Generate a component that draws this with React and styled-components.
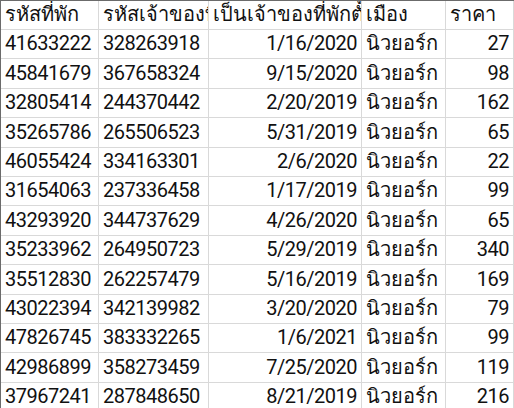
import React from 'react'
import styled, {createGlobalStyle} from 'styled-components'

const GlobalStyle = createGlobalStyle`
  html, body {
    margin: 0;
    padding: 0;
    background: #ffffff;
    overflow: hidden;
  }
`

const colors = {
  grid: '#d9d9d9',
  edge: '#6b6b6b',
  text: '#111111',
}

const columns = '98px 110px 153px 84px 1fr'

const Sheet = styled.div`
  width: 514px;
  height: 408px;
  overflow: hidden;
  border-top: 1px solid ${colors.edge};
  border-left: 1px solid ${colors.edge};
  box-sizing: border-box;
  font-family: Roboto, "Noto Sans", "Open Sans", sans-serif;
  color: ${colors.text};
`

const Row = styled.div`
  display: grid;
  grid-template-columns: ${columns};
  height: ${p => p.header ? '29px' : '29.4px'};
`

const Cell = styled.div`
  display: flex;
  align-items: flex-end;
  justify-content: ${p => p.right ? 'flex-end' : 'flex-start'};
  padding: 0 4px 3px 4px;
  border-right: 1px solid ${colors.grid};
  border-bottom: 1px solid ${colors.grid};
  box-sizing: border-box;
  overflow: hidden;
  white-space: nowrap;
  font-size: 20px;
  line-height: 24px;
  letter-spacing: ${p => p.thai ? '0' : '-0.5px'};
`

const headers = ['รหัสที่พัก', 'รหัสเจ้าของที่พัก', 'เป็นเจ้าของที่พักตั้งแต่', 'เมือง', 'ราคา']

const rows = [
  ['41633222', '328263918', '1/16/2020', 27],
  ['45841679', '367658324', '9/15/2020', 98],
  ['32805414', '244370442', '2/20/2019', 162],
  ['35265786', '265506523', '5/31/2019', 65],
  ['46055424', '334163301', '2/6/2020', 22],
  ['31654063', '237336458', '1/17/2019', 99],
  ['43293920', '344737629', '4/26/2020', 65],
  ['35233962', '264950723', '5/29/2019', 340],
  ['35512830', '262257479', '5/16/2019', 169],
  ['43022394', '342139982', '3/20/2020', 79],
  ['47826745', '383332265', '1/6/2021', 99],
  ['42986899', '358273459', '7/25/2020', 119],
  ['37967241', '287848650', '8/21/2019', 216],
]

export default function App() {
  return (
    <>
      <GlobalStyle />
      <Sheet>
        <Row header>
          {headers.map(h => <Cell key={h} thai>{h}</Cell>)}
        </Row>
        {rows.map(([id, host, since, price]) => (
          <Row key={id}>
            <Cell>{id}</Cell>
            <Cell>{host}</Cell>
            <Cell right>{since}</Cell>
            <Cell thai>นิวยอร์ก</Cell>
            <Cell right>{price}</Cell>
          </Row>
        ))}
      </Sheet>
    </>
  )
}
